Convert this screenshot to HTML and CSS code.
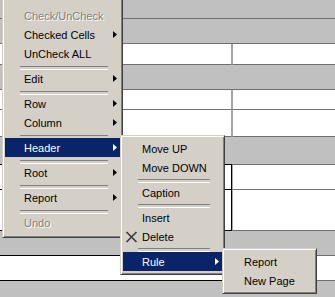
FILE: index.html
```html
<!DOCTYPE html>
<html lang="en">
<head>
    <meta charset="UTF-8">
    <title>Grid menu</title>
    <link rel="stylesheet" href="styles.css">
</head>
<body>
    <!-- hoja de fondo -->
    <div class="grid">
        <div class="row gray h19"><div class="cell cell-left"></div><div class="cell cell-right"></div></div>
        <div class="row gray h25"><div class="cell cell-left"></div><div class="cell cell-right"></div></div>
        <div class="row white h21"><div class="cell cell-left"></div><div class="cell cell-right"></div></div>
        <div class="row gray h25"><div class="cell cell-left"></div><div class="cell cell-right"></div></div>
        <div class="row white h20"><div class="cell cell-left"></div><div class="cell cell-right"></div></div>
        <div class="row white h27"><div class="cell cell-left"></div><div class="cell cell-right"></div></div>
        <div class="row gray dark h28"><div class="cell cell-left"></div><div class="cell cell-right"></div></div>
        <div class="row white dark marked h25"><div class="cell cell-left"></div><div class="cell cell-right"></div></div>
        <div class="row white dark marked h41"><div class="cell cell-left"></div><div class="cell cell-right"></div></div>
        <div class="row gray dark h25"><div class="cell cell-left"></div><div class="cell cell-right"></div></div>
        <div class="row white dark h25"><div class="cell cell-left"></div><div class="cell cell-right"></div></div>
        <div class="row gray last"><div class="cell cell-left"></div><div class="cell cell-right"></div></div>
    </div>

    <!-- menu contextual -->
    <div class="menu menu-main">
        <div class="item disabled">Check/UnCheck</div>
        <div class="item">Checked Cells<span class="arrow"></span></div>
        <div class="item">UnCheck ALL</div>
        <div class="sep"></div>
        <div class="item">Edit<span class="arrow"></span></div>
        <div class="sep"></div>
        <div class="item">Row<span class="arrow"></span></div>
        <div class="item">Column<span class="arrow"></span></div>
        <div class="sep"></div>
        <div class="item active">Header<span class="arrow"></span></div>
        <div class="sep"></div>
        <div class="item">Root<span class="arrow"></span></div>
        <div class="sep"></div>
        <div class="item">Report<span class="arrow"></span></div>
        <div class="sep"></div>
        <div class="item disabled">Undo</div>
    </div>

    <div class="menu sub menu-header">
        <div class="item">Move UP</div>
        <div class="item">Move DOWN</div>
        <div class="sep"></div>
        <div class="item">Caption</div>
        <div class="sep"></div>
        <div class="item">Insert</div>
        <div class="item">
            <svg class="icon" width="13" height="12" viewBox="0 0 13 12">
                <path d="M1.5 1 L11.5 11 M11.5 1 L1.5 11" stroke="#3c3c3c" stroke-width="1.7" fill="none"/>
            </svg>
            Delete
        </div>
        <div class="sep"></div>
        <div class="item active">Rule<span class="arrow"></span></div>
    </div>

    <div class="menu sub menu-rule">
        <div class="item">Report</div>
        <div class="item">New Page</div>
    </div>
</body>
</html>
```
FILE: styles.css
```css
/* Base */
* {
    box-sizing: border-box;
}

body {
    margin: 0;
    width: 335px;
    height: 297px;
    overflow: hidden;
    position: relative;
    background-color: #c0c0c0;
    font-family: "Liberation Sans", Arial, sans-serif;
    font-size: 11px;
    color: #000;
}

/* Hoja de fondo */
.row {
    display: flex;
}

.h19 { height: 19px; }
.h20 { height: 20px; }
.h21 { height: 21px; }
.h25 { height: 25px; }
.h27 { height: 27px; }
.h28 { height: 28px; }
.h41 { height: 41px; }
.last { height: 20px; }

.gray { background-color: #c0c0c0; }
.white { background-color: #fff; }

.cell {
    border-bottom: 1px solid #707070;
}

.last .cell {
    border-bottom: none;
}

.cell-left {
    width: 232px;
}

.cell-right {
    flex: 1;
}

.white .cell-left {
    border-right: 1px solid #a4a4a4;
}

.white .cell-right {
    border-left: 1px solid #a4a4a4;
}

.dark .cell-left {
    border-bottom-color: #000;
}

.marked .cell-left {
    border-right-color: #000;
}

/* Menus */
.menu {
    position: absolute;
    background-color: #d4d0c8;
    border: 1px solid;
    border-color: #d4d0c8 #404040 #404040 #d4d0c8;
    box-shadow: inset 1px 1px #fff, inset -1px -1px #808080;
    padding: 3px 2px;
}

.menu-main {
    left: 2px;
    top: -4px;
    width: 121px;
    padding-top: 9px;
    padding-bottom: 5px;
}

.menu-header {
    left: 120px;
    top: 135px;
    width: 105px;
}

.menu-rule {
    left: 222px;
    top: 248px;
    width: 95px;
}

.item {
    height: 19px;
    display: flex;
    align-items: center;
    padding: 0 3px 0 19px;
    position: relative;
    white-space: nowrap;
}

.item.active {
    background-color: #0a246a;
    color: #fff;
}

.item.disabled {
    color: #808080;
    text-shadow: 1px 1px #fff;
}

.arrow {
    margin-left: auto;
    width: 4px;
    height: 7px;
    background-color: currentColor;
    clip-path: polygon(0 0, 100% 50%, 0 100%);
}

.icon {
    position: absolute;
    left: 2px;
    top: 4px;
}

.sep {
    height: 6px;
    padding: 3px 12px 0 15px;
}

.sub .sep {
    padding-top: 2px;
}

.sep::before {
    content: "";
    display: block;
    height: 2px;
    border-top: 1px solid #808080;
    border-bottom: 1px solid #fff;
}
```
